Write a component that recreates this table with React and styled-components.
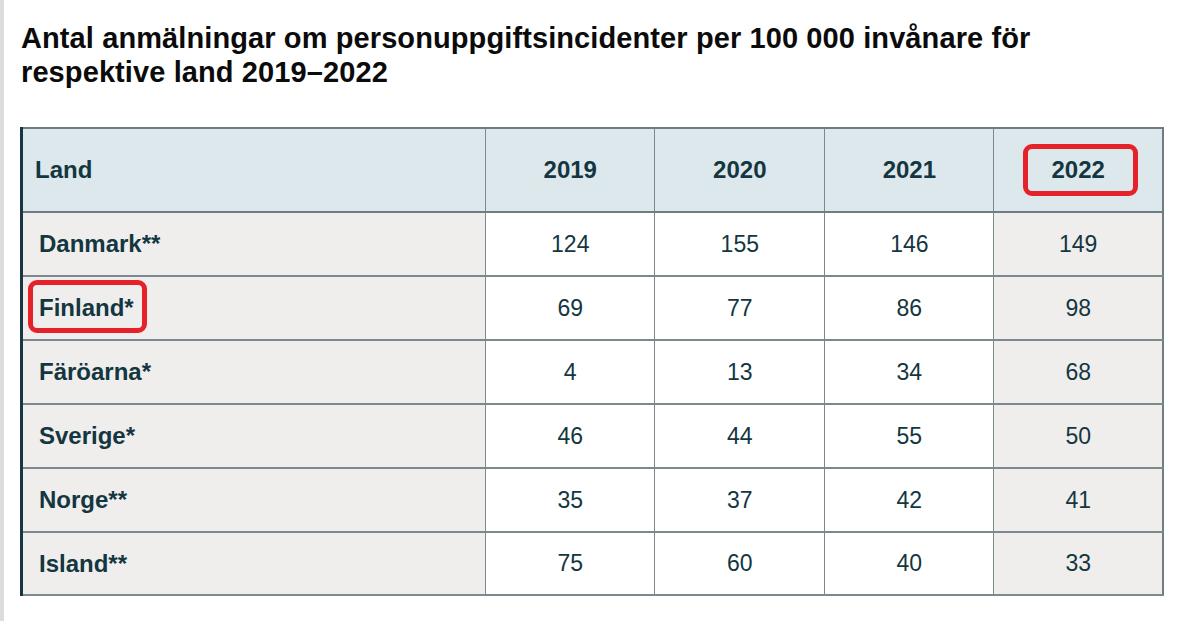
import React from 'react';
import styled, { createGlobalStyle } from 'styled-components';

const GlobalStyle = createGlobalStyle`
	html, body {
		margin: 0;
		background: #ffffff;
	}
	body {
		font-family: 'Liberation Sans', Arial, sans-serif;
	}
`;

//Page with the grey strip on the left
const Page = styled.div`
	min-height: 621px;
	box-sizing: border-box;
	border-left: 4px solid #dcdcdc;
	padding: 21px 0 0 16px;
`;

const Title = styled.h1`
	margin: 0 0 38px 1px;
	font-size: 29px;
	line-height: 34px;
	font-weight: 700;
	letter-spacing: 0.1px;
	color: #0b0b0b;
	max-width: 1080px;
`;

const Table = styled.table`
	width: 1144px;
	table-layout: fixed;
	border-collapse: collapse;
	border-top: 2px solid #6f7d82;
	border-right: 2px solid #6f7d82;
	border-bottom: 2px solid #6f7d82;
	border-left: 3px solid #173842;
	color: #143640;
	font-size: 23px;
`;

const HeadRow = styled.tr`
	height: 84px;
	background: #dde8ed;
	border-bottom: 2px solid #6f7d82;
`;

const Row = styled.tr`
	height: 64px;
	border-bottom: 2px solid #7c898d;
	&:last-child {
		height: 63px;
	}
`;

const HeadCell = styled.th`
	font-weight: 700;
	font-size: 24px;
	text-align: ${p => (p.$left ? 'left' : 'center')};
	padding: 0 0 0 ${p => (p.$left ? '12px' : '0')};
	border-left: 1px solid #7c898d;
`;

const LabelCell = styled.td`
	font-weight: 700;
	font-size: 24px;
	padding: 0 0 0 16px;
	background: #efeeec;
`;

const NumCell = styled.td`
	text-align: center;
	padding: 0;
	border-left: 1px solid #7c898d;
	background: ${p => (p.$shade ? '#efeeec' : '#ffffff')};
`;

//Red annotation frame drawn over the text
const Marked = styled.span`
	position: relative;
	display: inline-block;
	&::after {
		content: '';
		position: absolute;
		top: ${p => p.$inset[0]}px;
		right: ${p => p.$inset[1]}px;
		bottom: ${p => p.$inset[2]}px;
		left: ${p => p.$inset[3]}px;
		border: 5px solid #e5212a;
		border-radius: 9px;
	}
`;

const years = ['2019', '2020', '2021', '2022'];

const rows = [
	{ land: 'Danmark**', values: [124, 155, 146, 149] },
	{ land: 'Finland*', values: [69, 77, 86, 98], marked: true },
	{ land: 'Färöarna*', values: [4, 13, 34, 68] },
	{ land: 'Sverige*', values: [46, 44, 55, 50] },
	{ land: 'Norge**', values: [35, 37, 42, 41] },
	{ land: 'Island**', values: [75, 60, 40, 33] },
];

const App = () => {
	return (
		<Page>
			<GlobalStyle />
			<Title>
				Antal anmälningar om personuppgiftsincidenter per 100 000 invånare för respektive land 2019–2022
			</Title>
			<Table>
				<colgroup>
					<col style={{ width: '464px' }} />
					<col style={{ width: '169px' }} />
					<col style={{ width: '170px' }} />
					<col style={{ width: '169px' }} />
					<col style={{ width: '169px' }} />
				</colgroup>
				<thead>
					<HeadRow>
						<HeadCell $left>Land</HeadCell>
						{years.map(y => (
							<HeadCell key={y}>
								{y === '2022' ? <Marked $inset={[-12, -33, -12, -29]}>{y}</Marked> : y}
							</HeadCell>
						))}
					</HeadRow>
				</thead>
				<tbody>
					{rows.map(r => (
						<Row key={r.land}>
							<LabelCell>
								{r.marked ? <Marked $inset={[-14, -13, -11, -11]}>{r.land}</Marked> : r.land}
							</LabelCell>
							{r.values.map((v, i) => (
								<NumCell key={i} $shade={i === 3}>{v}</NumCell>
							))}
						</Row>
					))}
				</tbody>
			</Table>
		</Page>
	);
};

export default App;
